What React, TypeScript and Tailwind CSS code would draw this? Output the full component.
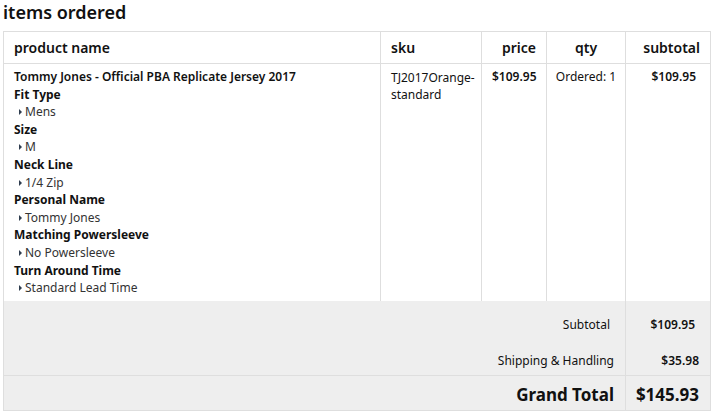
import React from 'react'

const options = [
  { label: 'Fit Type', value: 'Mens' },
  { label: 'Size', value: 'M' },
  { label: 'Neck Line', value: '1/4 Zip' },
  { label: 'Personal Name', value: 'Tommy Jones' },
  { label: 'Matching Powersleeve', value: 'No Powersleeve' },
  { label: 'Turn Around Time', value: 'Standard Lead Time' },
]

function Caret() {
  return (
    <span className="inline-block w-0 h-0 border-y-[3px] border-y-transparent border-l-[3px] border-l-[#2f3d4f] mr-[3px] align-[1px]" />
  )
}

export default function App() {
  return (
    <div className="bg-white w-[720px] h-[411px] overflow-hidden pl-[3px] text-[#111]" style={{ fontFamily: '"Noto Sans", "Open Sans", sans-serif' }}>
      <h2 className="text-[18px] font-semibold leading-[24px] h-[31px]">items ordered</h2>
      <table className="w-[707px] border-collapse border border-[#dedede] table-fixed">
        <colgroup>
          <col className="w-[377px]" />
          <col className="w-[101px]" />
          <col className="w-[65px]" />
          <col className="w-[79px]" />
          <col className="w-[85px]" />
        </colgroup>
        <thead>
          <tr className="h-[32px] text-[14px] border-b border-[#dedede]">
            <th className="text-left px-[10px] font-semibold">product name</th>
            <th className="text-left px-[10px] font-semibold border-l border-[#dedede]">sku</th>
            <th className="text-right px-[10px] font-semibold border-l border-[#dedede]">price</th>
            <th className="text-center px-[6px] font-semibold border-l border-[#dedede]">qty</th>
            <th className="text-right px-[10px] font-semibold border-l border-[#dedede]">subtotal</th>
          </tr>
        </thead>
        <tbody>
          <tr className="h-[237px] align-top text-[12px] leading-[17.6px]">
            <td className="px-[10px] pt-[4px]">
              <div className="font-semibold">Tommy Jones - Official PBA Replicate Jersey 2017</div>
              {options.map(o => (
                <div key={o.label}>
                  <div className="font-bold">{o.label}</div>
                  <div className="pl-[5px] text-[#333]"><Caret />{o.value}</div>
                </div>
              ))}
            </td>
            <td className="px-[10px] pt-[5px] border-l border-[#dedede] leading-[17px]">TJ2017Orange-standard</td>
            <td className="px-[10px] pt-[4px] text-right font-semibold border-l border-[#dedede]">$109.95</td>
            <td className="px-[4px] pt-[4px] text-center border-l border-[#dedede]">Ordered: 1</td>
            <td className="pl-[10px] pr-[14px] pt-[4px] text-right font-semibold border-l border-[#dedede]">$109.95</td>
          </tr>
        </tbody>
        <tfoot className="bg-[#eeeeee] text-[12px]">
          <tr className="h-[46px]">
            <td colSpan={4} className="text-right pr-[15px] pt-[2px]">Subtotal</td>
            <td className="text-right pr-[15px] pt-[2px] font-semibold border-l border-[#dedede]">$109.95</td>
          </tr>
          <tr className="h-[29px] border-b border-[#dedede]">
            <td colSpan={4} className="text-right pr-[11px] pt-[1px]">Shipping &amp; Handling</td>
            <td className="text-right pr-[11px] pt-[1px] font-semibold border-l border-[#dedede]">$35.98</td>
          </tr>
          <tr className="h-[35px] text-[17px] font-bold">
            <td colSpan={4} className="text-right pr-[11px] pt-[3px]">Grand Total</td>
            <td className="text-right pr-[11px] pt-[3px] border-l border-[#dedede]">$145.93</td>
          </tr>
        </tfoot>
      </table>
    </div>
  )
}
